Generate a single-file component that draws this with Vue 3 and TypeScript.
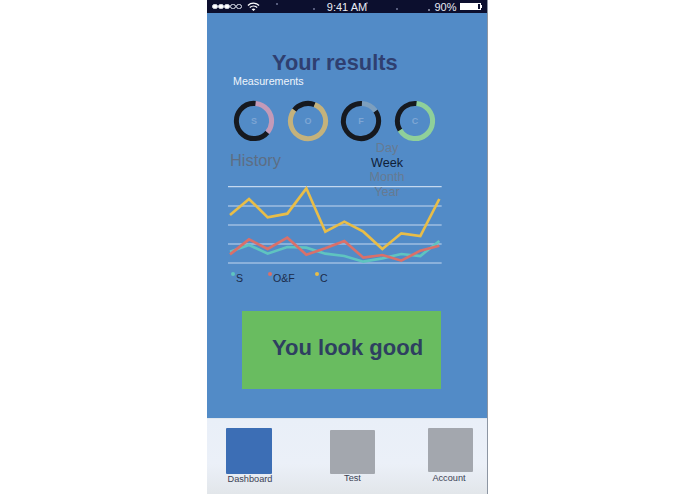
<script setup lang="ts">
interface Ring { label: string; color: string; start: number; sweep: number }
const R = 17.6
const C = 2 * Math.PI * R
const rings: Ring[] = [
  { label: 'S', color: '#c49ab8', start: 5, sweep: 125 },
  { label: 'O', color: '#c4b27c', start: 22, sweep: 285 },
  { label: 'F', color: '#7d9fbe', start: 3, sweep: 52 },
  { label: 'C', color: '#8fd09a', start: 5, sweep: 232 },
]
const dash = (r: Ring) => `${(r.sweep / 360) * C} ${C}`
const rot = (r: Ring) => `rotate(${r.start - 90} 22 22)`
const restDash = (r: Ring) => `${((360 - r.sweep) / 360) * C} ${C}`
const restRot = (r: Ring) => `rotate(${r.start + r.sweep - 90} 22 22)`
const grid = [35, 93, 150, 207, 264]
const series = [
  { color: '#5fc4c0', pts: '30,230 87,210 143,236 202,216 259,218 316,236 373,243 430,260 487,250 544,237 601,243 658,198' },
  { color: '#d9706a', pts: '30,238 87,193 143,222 202,188 259,239 316,220 373,198 430,248 487,240 544,257 601,227 658,212' },
  { color: '#e8bd48', pts: '30,120 87,72 143,127 202,116 259,40 316,170 373,140 430,170 487,222 544,175 601,183 658,72' },
]
const legend = [
  { label: 'S', color: '#5fc4c0', width: '37px' },
  { label: 'O&F', color: '#d9706a', width: '47px' },
  { label: 'C', color: '#e8bd48', width: '20px' },
]
const periods = ['Day', 'Week', 'Month', 'Year']
</script>

<template>
  <div class="page">
    <div class="phone">
      <header class="status">
        <div class="status-left">
          <span class="signal on"></span><span class="signal on"></span><span class="signal on"></span><span class="signal"></span><span class="signal"></span>
          <svg class="wifi" viewBox="0 0 14 10" width="13" height="9.5">
            <path d="M1 3.6C4.4.4 9.6.4 13 3.6" fill="none" stroke="#fff" stroke-width="1.4" />
            <path d="M3 5.8c2.3-2.1 5.7-2.1 8 0" fill="none" stroke="#fff" stroke-width="1.4" />
            <path d="M7 9.6 5 7.6c1.2-1 2.8-1 4 0z" fill="#fff" />
          </svg>
        </div>
        <span class="time">9:41 AM</span>
        <div class="status-right">
          <span>90%</span>
          <span class="battery"><span class="charge"></span></span>
          <span class="nub"></span>
        </div>
      </header>

      <main class="main">
        <h1 class="title">Your results</h1>
        <div class="measure">Measurements</div>
        <div class="rings">
          <div v-for="r in rings" :key="r.label" class="ring">
            <svg viewBox="0 0 44 44" width="44" height="44">
              <circle cx="22" cy="22" :r="R" fill="none" stroke="#16191f" stroke-width="5" :stroke-dasharray="restDash(r)" :transform="restRot(r)" />
              <circle cx="22" cy="22" :r="R" fill="none" :stroke="r.color" stroke-width="5" :stroke-dasharray="dash(r)" :transform="rot(r)" />
              <text x="22" y="25.2" text-anchor="middle" class="ring-label">{{ r.label }}</text>
            </svg>
          </div>
        </div>

        <div class="history">History</div>
        <ul class="periods">
          <li v-for="p in periods" :key="p" :class="{ active: p === 'Week' }">{{ p }}</li>
        </ul>

        <svg class="chart" viewBox="0 0 690 300" width="230" height="100">
          <line v-for="y in grid" :key="y" x1="24" x2="665" :y1="y" :y2="y" stroke="#c4d8ef" stroke-width="3.4" />
          <polyline v-for="s in series" :key="s.color" :points="s.pts" fill="none" :stroke="s.color" stroke-width="8" stroke-linejoin="miter" />
        </svg>

        <div class="legend">
          <div v-for="l in legend" :key="l.label" class="legend-item" :style="{ width: l.width }">
            <span class="dot" :style="{ background: l.color }"></span>
            <span>{{ l.label }}</span>
          </div>
        </div>

        <div class="verdict">You look good</div>
      </main>

      <nav class="tabs">
        <div class="tab tab-a"><div class="tile tile-active"></div><span>Dashboard</span></div>
        <div class="tab tab-b"><div class="tile"></div><span>Test</span></div>
        <div class="tab tab-c"><div class="tile"></div><span>Account</span></div>
      </nav>
    </div>
  </div>
</template>

<style>
html, body { margin: 0; background: #fff; }
</style>

<style scoped>
.page {
  width: 695px;
  height: 494px;
  padding-left: 207px;
  box-sizing: border-box;
  overflow: hidden;
  font-family: "Liberation Sans", Arial, sans-serif;
}
.phone {
  width: 281px;
  height: 494px;
  display: flex;
  flex-direction: column;
  border-right: 1px solid #8d96a3;
  box-sizing: border-box;
}
.status {
  height: 13px;
  flex: none;
  background-color: #0c0f2e;
  background-image:
    radial-gradient(circle at 70px 4px, #8d93b5 0.5px, transparent 1px),
    radial-gradient(circle at 107px 9px, #8d93b5 0.5px, transparent 1px),
    radial-gradient(circle at 160px 3px, #7d83a5 0.5px, transparent 1px),
    radial-gradient(circle at 190px 9px, #8d93b5 0.5px, transparent 1px),
    radial-gradient(circle at 222px 10px, #c5c9dd 0.5px, transparent 1px);
  color: #e8ebf4;
  font-size: 11px;
  display: grid;
  grid-template-columns: 1fr auto 1fr;
  align-items: center;
  padding: 0 5px 0 5px;
  box-sizing: border-box;
}
.status-left { display: flex; align-items: center; gap: 0.5px; }
.signal {
  width: 5.5px;
  height: 5.5px;
  border-radius: 50%;
  border: 0.7px solid #dfe3ee;
  box-sizing: border-box;
}
.signal.on { background: #fff; }
.wifi { margin-left: 5px; }
.status-right { display: flex; align-items: center; justify-content: flex-end; }
.battery {
  width: 21px;
  height: 7px;
  margin-left: 3px;
  border: 1px solid #fff;
  box-sizing: border-box;
  display: block;
}
.charge { display: block; width: 90%; height: 100%; background: #fff; }
.nub { width: 1.5px; height: 3px; background: #fff; }
.main {
  position: relative;
  flex: none;
  height: 405px;
  background: #528bc7;
  box-sizing: border-box;
  padding-top: 37px;
}
.title {
  margin: 0 0 0 65px;
  font-size: 21.8px;
  line-height: 26px;
  font-weight: 700;
  color: #2f3f70;
}
.measure {
  margin: -1px 0 0 26px;
  font-size: 10.7px;
  line-height: 13px;
  color: #eef4fb;
}
.rings {
  display: flex;
  margin: 11px 0 0 25px;
  width: 205px;
}
.ring { width: 53.5px; height: 44px; flex: none; }
.ring svg { display: block; }
.ring-label {
  font-size: 9px;
  font-weight: 700;
  font-family: "Liberation Sans", Arial, sans-serif;
  fill: #7ea6d4;
}
.history {
  margin: 7px 0 0 23px;
  font-size: 16.4px;
  line-height: 20px;
  color: #5d6e84;
}
.periods {
  position: absolute;
  left: 150px;
  top: 128px;
  width: 60px;
  margin: 0;
  padding: 0;
  list-style: none;
  text-align: center;
  font-size: 12.6px;
  line-height: 14.6px;
  color: #667a92;
}
.periods .active { color: #0f2038; }
.chart {
  display: block;
  margin: 5px 0 0 13px;
}
.legend {
  display: flex;
  margin: -3px 0 0 24px;
  font-size: 10.6px;
  line-height: 12px;
  color: #1c2c4a;
}
.legend-item { position: relative; padding-left: 5px; flex: none; box-sizing: border-box; }
.dot {
  position: absolute;
  left: 0;
  top: 0;
  width: 4px;
  height: 4px;
  border-radius: 50%;
}
.verdict {
  margin: 27px 0 0 35px;
  width: 199px;
  height: 78px;
  box-sizing: border-box;
  padding-left: 30px;
  background: #69bc60;
  color: #2e3f60;
  font-size: 22px;
  line-height: 74px;
  font-weight: 700;
}
.tabs {
  flex: 1;
  position: relative;
  display: flex;
  align-items: flex-start;
  background: linear-gradient(#e9eff8 0%, #ebf0f8 60%, #e2e6ea 100%);
  border-top: 1px solid #dfe6ee;
  box-sizing: border-box;
  font-size: 9.2px;
  color: #3b4254;
}
.tab { display: flex; flex-direction: column; align-items: center; flex: none; }
.tab span { line-height: 11px; }
.tab-a span { margin-left: 2px; }
.tab-b span { margin-top: -1px; }
.tab-c span { margin: 1px 3px 0 0; }
.tab-a { margin: 9px 0 0 19px; width: 46px; }
.tab-b { margin: 11px 0 0 58px; width: 45px; }
.tab-c { margin: 9px 0 0 53px; width: 45px; }
.tile {
  width: 45px;
  height: 45px;
  flex: none;
  background: #a3a7ae;
  border-radius: 1px;
}
.tab-b .tile { height: 44px; }
.tab-c .tile { height: 44px; }
.tile-active { width: 46px; height: 46px; background: #3c6eb5; }
</style>
